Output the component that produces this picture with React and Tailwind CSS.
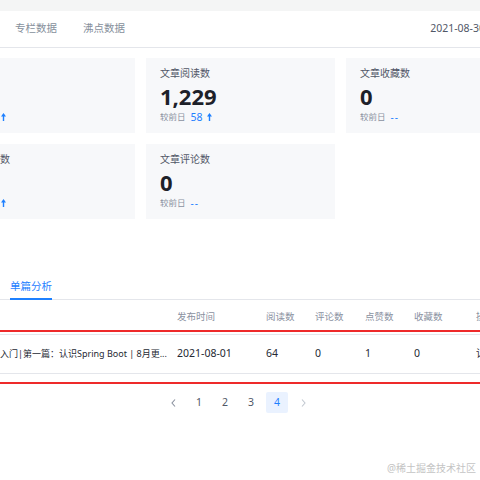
import React from 'react';

const UpArrow = () => (
  <svg width="5" height="8" viewBox="0 0 5 8" className="ml-[4px]">
    <path d="M2.5 0 L5 3.6 H3.2 V8 H1.8 V3.6 H0 Z" fill="#1e80ff" />
  </svg>
);

const cards = [
  { title: '总展现数', value: '86', diff: '6' },
  { title: '文章阅读数', value: '1,229', diff: '58' },
  { title: '文章收藏数', value: '0', diff: null },
  { title: '文章点赞数', value: '8', diff: '3' },
  { title: '文章评论数', value: '0', diff: null },
];

const StatCard = ({ title, value, diff }) => (
  <div className="h-[75px] bg-[#f7f8fa] pl-[14px] pt-[8px] overflow-hidden">
    <div className="text-[10px] leading-[14px] text-[#515767] whitespace-nowrap">{title}</div>
    <div className="mt-[3px] text-[22px] leading-[26px] font-bold text-[#1d2129]">{value}</div>
    <div className="mt-[2px] flex items-center text-[8.5px] leading-[12px] text-[#8a919f] whitespace-nowrap">
      <span>较前日</span>
      {diff ? (
        <>
          <span className="ml-[5px] text-[10.5px] text-[#1e80ff]">{diff}</span>
          <UpArrow />
        </>
      ) : (
        <span className="ml-[5px] text-[10px] text-[#1e80ff] tracking-[1px]">--</span>
      )}
    </div>
  </div>
);

const cols = ['w-[177px]', 'w-[89px]', 'w-[49px]', 'w-[50px]', 'w-[49px]', 'w-[62px]', 'w-[40px]'];

export default function App() {
  const head = ['', '发布时间', '阅读数', '评论数', '点赞数', '收藏数', '操作'];
  const row = ['2021-08-01', '64', '0', '1', '0', '详情'];

  return (
    <div className="relative w-[480px] h-[480px] overflow-hidden bg-white font-['Noto_Sans','Noto_Sans_CJK_SC',sans-serif]">
      <div className="h-[11px] bg-[#f4f5f5]" />

      {/* header tabs */}
      <div className="h-[37px] flex items-center border-b border-[#e4e6eb] pl-[15px] text-[10.5px]">
        <span className="text-[#86909c]">专栏数据</span>
        <span className="ml-[26px] text-[#86909c]">沸点数据</span>
        <span className="ml-auto mr-[-5px] shrink-0 whitespace-nowrap text-[#515767]">2021-08-30</span>
      </div>

      {/* stat cards */}
      <div className="mt-[10px] ml-[-54px] grid grid-cols-[189px_189px_189px] gap-[11px] w-max">
        {cards.map((c) => (
          <StatCard key={c.title} {...c} />
        ))}
      </div>

      {/* tab bar */}
      <div className="mt-[60px] flex border-b border-[#e4e6eb] pl-[10px]">
        <span className="pb-[5px] -mb-px border-b-2 border-[#1e80ff] text-[10.5px] leading-[14px] text-[#1e80ff]">单篇分析</span>
      </div>

      {/* table */}
      <div className="relative">
        <div className="h-[35px] flex items-center border-b border-[#e4e6eb] text-[9.5px] text-[#8a919f]">
          {head.map((h, i) => (
            <div key={i} className={`${cols[i]} shrink-0 whitespace-nowrap`}>{h}</div>
          ))}
        </div>
        <div className="h-[39px] flex items-center border-b border-[#e4e6eb] text-[10.5px] text-[#252933]">
          <div className="w-[177px] shrink-0 pr-[6px] whitespace-nowrap overflow-hidden text-[9px]">
            入门|第一篇：认识Spring Boot | 8月更...
          </div>
          {row.map((t, i) => (
            <div key={i} className={`${cols[i + 1]} shrink-0 whitespace-nowrap overflow-hidden`}>{t}</div>
          ))}
        </div>
        <div className="absolute top-[30px] left-[-10px] right-[-10px] h-[54px] border-2 border-[#ee2a2a]" />
      </div>

      {/* pagination */}
      <div className="mt-[18px] pl-[162px] flex gap-[4px] text-[10.5px] text-[#515767]">
        <div className="w-[22px] h-[21px] flex items-center justify-center">
          <svg width="5" height="8" viewBox="0 0 5 8">
            <path d="M4 0.5 L1 4 L4 7.5" stroke="#8a919f" strokeWidth="1.1" fill="none" />
          </svg>
        </div>
        {['1', '2', '3'].map((n) => (
          <div key={n} className="w-[22px] h-[21px] flex items-center justify-center">{n}</div>
        ))}
        <div className="w-[22px] h-[21px] flex items-center justify-center rounded-[2px] bg-[#eaf2ff] text-[#1e80ff]">4</div>
        <div className="w-[22px] h-[21px] flex items-center justify-center">
          <svg width="5" height="8" viewBox="0 0 5 8">
            <path d="M1 0.5 L4 4 L1 7.5" stroke="#c2c8d1" strokeWidth="1.1" fill="none" />
          </svg>
        </div>
      </div>

      <div className="absolute right-[4px] top-[461px] text-[10px] text-[#c4c4c4] whitespace-nowrap">@稀土掘金技术社区</div>
    </div>
  );
}
